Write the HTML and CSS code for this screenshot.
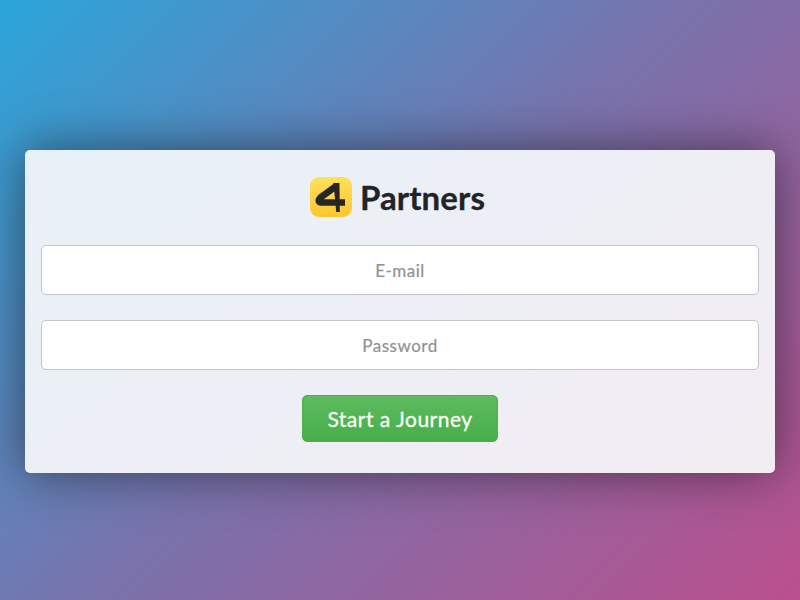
FILE: index.html
```html
<!DOCTYPE html>
<html lang="en">
<head>
<meta charset="utf-8">
<title>4Partners</title>
<link rel="stylesheet" href="styles.css">
</head>
<body>
<main class="card">
  <div class="logo">
    <svg class="logo-icon" width="42" height="40" viewBox="0 0 42 40">
      <defs>
        <linearGradient id="g" x1="0" y1="0" x2="0" y2="1">
          <stop offset="0" stop-color="#ffe05a"/>
          <stop offset="1" stop-color="#fdc62e"/>
        </linearGradient>
      </defs>
      <rect width="42" height="40" rx="9" fill="url(#g)"/>
      <path d="M27 8.5 L10.5 20.5 Q6.5 25 11.5 25.5 L35 25.5" fill="none" stroke="#262624" stroke-width="6.5" stroke-linejoin="round"/>
      <path d="M23.5 6 L29.5 6 L29.8 35 L26.2 35 Z" fill="#262624"/>
    </svg>
    <span class="logo-text">Partners</span>
  </div>
  <form class="form">
    <input class="field" type="text" placeholder="E-mail">
    <input class="field" type="password" placeholder="Password">
    <button class="submit" type="button">Start a Journey</button>
  </form>
</main>
</body>
</html>
```
FILE: styles.css
```css
html, body {
  margin: 0;
  height: 100%;
}
body {
  box-sizing: border-box;
  width: 800px;
  height: 600px;
  padding-top: 150px;
  overflow: hidden;
  display: flex;
  align-items: flex-start;
  justify-content: center;
  background: linear-gradient(135deg, #2aa6da 0%, #7a72ab 50%, #bb4f8d 100%);
  font-family: "Lato", sans-serif;
}
.card {
  box-sizing: border-box;
  width: 750px;
  height: 323px;
  padding: 27px 16px 0;
  border-radius: 5px;
  background: linear-gradient(145deg, #e8f1f8 0%, #f3ecf3 100%);
  box-shadow: 0 0 50px rgba(0, 0, 0, 0.5);
}
.logo {
  display: flex;
  align-items: center;
  justify-content: center;
  gap: 8px;
  height: 40px;
  margin-bottom: 28px;
  padding-right: 5px;
}
.logo-icon {
  display: block;
}
.logo-text {
  font-size: 33px;
  font-weight: 700;
  letter-spacing: 0.1px;
  color: #222326;
  line-height: 40px;
  -webkit-text-stroke: 0.3px #222326;
}
.form {
  display: flex;
  flex-direction: column;
  align-items: center;
  gap: 25px;
}
.field {
  box-sizing: border-box;
  width: 718px;
  height: 50px;
  border: 1px solid #c4c4cc;
  border-radius: 5px;
  background: #fff;
  text-align: center;
  font-family: "Lato", sans-serif;
  font-size: 17px;
  letter-spacing: 0.5px;
  color: #333;
  -webkit-text-stroke: 0.2px;
}
.field::placeholder {
  color: #919191;
  opacity: 1;
}
.submit {
  box-sizing: border-box;
  width: 196px;
  height: 47px;
  border: 1px solid #4caf4f;
  border-radius: 5px;
  background: linear-gradient(180deg, #5dbb60 0%, #47ae4a 100%);
  color: #fbfff5;
  font-family: "Lato", sans-serif;
  font-size: 21px;
  letter-spacing: 0.5px;
  -webkit-text-stroke: 0.3px;
}
```
